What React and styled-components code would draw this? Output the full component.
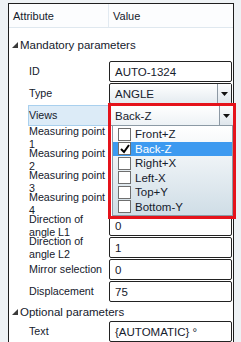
import React from 'react';
import styled, { createGlobalStyle, css } from 'styled-components';

const Global = createGlobalStyle`
  html, body { margin: 0; padding: 0; }
  body {
    width: 241px;
    height: 342px;
    overflow: hidden;
    background: #eef2f5;
    font-family: "Liberation Sans", Arial, sans-serif;
    font-size: 11px;
    color: #15202c;
  }
`;

const Page = styled.div`
  padding: 3px 7px 0 8px;
  height: 339px;
  overflow: hidden;
`;

const Panel = styled.div`
  background: #fff;
  border: 1px solid #1e1e1e;
  border-bottom: none;
  height: 340px;
  display: flex;
  flex-direction: column;
`;

const Header = styled.div`
  display: grid;
  grid-template-columns: 99px 1fr;
  height: 23px;
  border-bottom: 1px solid #dfe8ef;
  background: #fcfdfe;
`;

const HeadCell = styled.div`
  display: flex;
  align-items: center;
  padding-left: 4px;
  border-left: ${p => (p.$divider ? '1px solid #e2eaf1' : 'none')};
`;

const Group = styled.div`
  display: flex;
  align-items: center;
  gap: 2px;
  height: ${p => p.$h}px;
  padding-left: 3px;
  font-size: 11.5px;
`;

const Row = styled.div`
  display: grid;
  grid-template-columns: 99px 1fr;
  height: 22px;
  position: relative;
`;

const Label = styled.div`
  display: flex;
  align-items: center;
  padding-left: 20px;
  line-height: 13px;
  margin: 0 0 1px 0;
  ${p => p.$active && css`
    background: #dcebf7;
    border: 1px solid #a9d0ee;
    border-right: none;
    margin-left: 19px;
    padding-left: 0;
  `}
`;

const LabelText = styled.span`
  display: block;
  width: 82px;
  height: 13px;
  font-size: 10.7px;
  overflow: visible;
  white-space: normal;
  line-height: 13px;
  transform: ${p => (p.$wrap ? 'translateY(-6px)' : 'none')};
`;

const Box = styled.div`
  margin: 0 1px 1px 1px;
  height: 21px;
  box-sizing: border-box;
  border: 1px solid #222;
  border-radius: 2px;
  display: flex;
  align-items: center;
  padding-left: 5px;
  background: ${p => (p.$combo ? 'linear-gradient(#ffffff, #e4ebf0)' : '#fff')};
  font-size: 11.5px;
`;

const BoxText = styled.span`
  flex: 1;
`;

const DropButton = styled.div`
  width: 13px;
  height: 19px;
  border-left: 1px solid #8d99a4;
  background: linear-gradient(#fbfcfd, #dfe6ec);
  display: flex;
  align-items: center;
  justify-content: center;
`;

const RedFrame = styled.div`
  position: absolute;
  left: 99px;
  top: -2px;
  width: 122px;
  height: 110px;
  border: 3px solid #e5131b;
  z-index: 2;
  display: flex;
  flex-direction: column;
  background: #fff;
`;

const FrameCombo = styled(Box)`
  margin: 0;
  height: 20px;
  border-color: #8c9aa5;
  border-radius: 0;
  border-top: none;
  border-left: none;
  border-right: none;
  padding-left: 4px;
  background: linear-gradient(#ffffff, #edf2f5);
`;

const List = styled.div`
  flex: 1;
  border: 1px solid #8c9aa5;
  border-top: none;
  margin-left: 1px;
  background: linear-gradient(#ffffff, #cfdde6);
  display: flex;
  flex-direction: column;
  padding-top: 1px;
`;

const Item = styled.div`
  display: flex;
  align-items: center;
  gap: 4px;
  height: 14.5px;
  padding-left: 5px;
  font-size: 11.5px;
  background: ${p => (p.$selected ? '#3d9af0' : 'transparent')};
  color: ${p => (p.$selected ? '#fff' : '#15202c')};
`;

const Check = styled.div`
  width: 11px;
  height: 11px;
  border: 1px solid #6f6f6f;
  background: #fff;
  display: flex;
  align-items: center;
  justify-content: center;
`;

const Arrow = () => (
  <svg width="7" height="4" viewBox="0 0 7 4">
    <polygon points="0,0 7,0 3.5,4" fill="#111" />
  </svg>
);

const Expander = () => (
  <svg width="6" height="6" viewBox="0 0 6 6">
    <polygon points="0,6 6,0 6,6" fill="#3a3a3a" />
  </svg>
);

const Tick = () => (
  <svg width="10" height="10" viewBox="0 0 10 10">
    <path d="M1 5 L4 8 L9 1" stroke="#000" strokeWidth="2" fill="none" />
  </svg>
);

const views = ['Front+Z', 'Back-Z', 'Right+X', 'Left-X', 'Top+Y', 'Bottom-Y'];

const rows = [
  { label: 'ID', value: 'AUTO-1324' },
  { label: 'Type', value: 'ANGLE', combo: true },
  { label: 'Views', value: 'Back-Z', views: true },
  { label: 'Measuring point 1', wrap: true },
  { label: 'Measuring point 2', wrap: true },
  { label: 'Measuring point 3', wrap: true },
  { label: 'Measuring point 4', wrap: true },
  { label: 'Direction of angle L1', value: '0', wrap: true },
  { label: 'Direction of angle L2', value: '1', wrap: true },
  { label: 'Mirror selection', value: '0' },
  { label: 'Displacement', value: '75' },
];

function PropRow({ row }) {
  return (
    <Row>
      <Label $active={row.views}>
        <LabelText $wrap={row.wrap}>{row.label}</LabelText>
      </Label>
      {row.views ? (
        <RedFrame>
          <FrameCombo>
            <BoxText>Back-Z</BoxText>
            <DropButton><Arrow /></DropButton>
          </FrameCombo>
          <List>
            {views.map(v => (
              <Item key={v} $selected={v === 'Back-Z'}>
                <Check>{v === 'Back-Z' && <Tick />}</Check>
                {v}
              </Item>
            ))}
          </List>
        </RedFrame>
      ) : row.value !== undefined ? (
        <Box $combo={row.combo}>
          <BoxText>{row.value}</BoxText>
          {row.combo && <DropButton><Arrow /></DropButton>}
        </Box>
      ) : (
        <div />
      )}
    </Row>
  );
}

export default function App() {
  return (
    <>
      <Global />
      <Page>
        <Panel>
          <Header>
            <HeadCell>Attribute</HeadCell>
            <HeadCell $divider>Value</HeadCell>
          </Header>
          <Group $h={33}><Expander />Mandatory parameters</Group>
          {rows.map(r => <PropRow key={r.label} row={r} />)}
          <Group $h={18}><Expander />Optional parameters</Group>
          <PropRow row={{ label: 'Text', value: '{AUTOMATIC} °' }} />
        </Panel>
      </Page>
    </>
  );
}
